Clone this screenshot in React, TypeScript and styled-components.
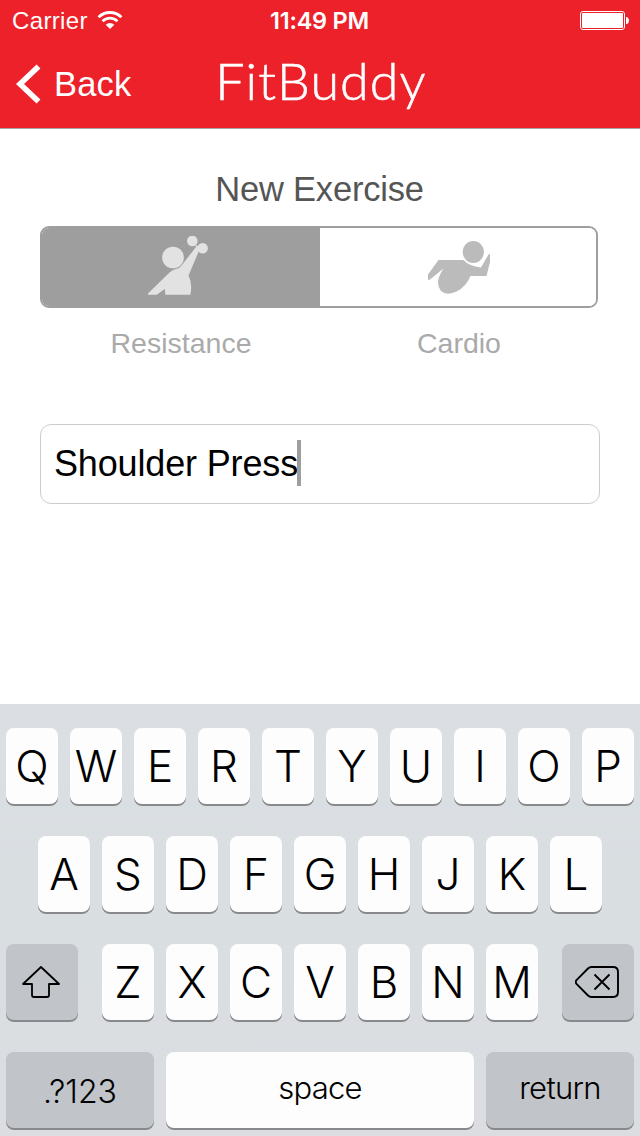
import React from "react";
import styled, { createGlobalStyle } from "styled-components";

const Global = createGlobalStyle`
  * { box-sizing: border-box; }
  body { margin: 0; background: #fff; }
`;

const sans = `"Liberation Sans", Arial, sans-serif`;
const light = `Inter, "Liberation Sans", sans-serif`;

const Screen = styled.div`
  width: 640px;
  height: 1136px;
  display: flex;
  flex-direction: column;
  overflow: hidden;
  background: #fff;
  font-family: ${sans};
`;

const Header = styled.header`
  height: 129px;
  background: #ed2129;
  border-bottom: 1px solid #a5a5a5;
  color: #fff;
`;

const StatusBar = styled.div`
  height: 40px;
  padding: 0 11px 0 12px;
  display: grid;
  grid-template-columns: 1fr auto 1fr;
  align-items: center;

  svg {
    margin-bottom: 2px;
  }
`;

const Carrier = styled.div`
  display: flex;
  align-items: center;
  gap: 9px;
  font-size: 24px;
  line-height: 42px;
  letter-spacing: 0.35px;
`;

const Clock = styled.div`
  font-family: ${light};
  font-weight: 600;
  font-size: 23.5px;
  line-height: 42px;
  padding-right: 2px;
  letter-spacing: -0.25px;
`;

const BatterySlot = styled.div`
  display: flex;
  justify-content: flex-end;
`;

const NavBar = styled.nav`
  height: 88px;
  padding: 0 16px;
  display: grid;
  grid-template-columns: 1fr auto 1fr;
`;

const BackButton = styled.div`
  display: flex;
  align-items: center;
  gap: 12px;
  font-size: 34.5px;
  line-height: 88px;
  letter-spacing: 0.2px;
`;

const Title = styled.h1`
  margin: 0;
  padding-left: 2px;
  font-family: Lato, sans-serif;
  font-weight: 300;
  font-size: 52px;
  line-height: 81px;
  letter-spacing: 1.1px;
  -webkit-text-stroke: 0.6px #fff;
`;

const Main = styled.main`
  height: 575px;
  padding: 40px 40px 0;
`;

const Heading = styled.h2`
  margin: 0;
  padding-right: 1px;
  font-weight: 400;
  font-size: 34.5px;
  line-height: 40px;
  letter-spacing: -0.2px;
  text-align: center;
  color: #555;
`;

const Segments = styled.div`
  width: 558px;
  height: 82px;
  margin-top: 17px;
  display: flex;
  border: 2px solid #9e9e9e;
  border-radius: 9px;
  overflow: hidden;
`;

const Segment = styled.div<{ $active?: boolean }>`
  width: ${(p) => (p.$active ? 278 : 276)}px;
  padding: ${(p) => (p.$active ? "0 4px 2px 0" : "0 0 0 2px")};
  display: flex;
  align-items: center;
  justify-content: center;
  background: ${(p) => (p.$active ? "#9e9e9e" : "#fff")};
`;

const Labels = styled.div`
  width: 560px;
  display: flex;
  margin-top: 17px;
`;

const Label = styled.div`
  flex: 1;
  padding-left: 2px;
  text-align: center;
  font-size: 28.5px;
  line-height: 36px;
  color: #aaa;

  & + & {
    padding: 0 2px 0 0;
  }
`;

const Field = styled.div`
  width: 560px;
  height: 80px;
  margin-top: 63px;
  padding-left: 13px;
  display: flex;
  align-items: center;
  border: 1px solid #ccc;
  border-radius: 11px;
  font-size: 36px;
  line-height: 78px;
  letter-spacing: -0.15px;
  color: #000;
`;

const Caret = styled.span`
  width: 4px;
  height: 46px;
  margin: 0 0 2px -1px;
  background: #9e9e9e;
`;

const Keyboard = styled.section`
  height: 432px;
  padding: 24px 6px 0;
  display: flex;
  flex-direction: column;
  gap: 32px;
  background: linear-gradient(#dbdfe3, #d9dee1 60%, #dcdde1);
`;

const Row = styled.div<{ $spread?: boolean }>`
  display: flex;
  justify-content: ${(p) => (p.$spread ? "space-between" : "center")};
  gap: 12px;
`;

const Letters = styled.div`
  display: flex;
  gap: 12px;
`;

const Key = styled.div<{ $w?: number; $dark?: boolean; $size?: number; $track?: number; $line?: number }>`
  width: ${(p) => p.$w ?? 52}px;
  height: 76px;
  display: flex;
  align-items: ${(p) => (p.$line ? "flex-start" : "center")};
  justify-content: center;
  border-radius: 8px;
  background: ${(p) => (p.$dark ? "#c1c4c8" : "#fdfdfd")};
  box-shadow: 0 2px 0 #88898c;
  font-family: ${light};
  font-weight: 300;
  font-size: ${(p) => p.$size ?? 44}px;
  letter-spacing: ${(p) => p.$track ?? 0}px;
  line-height: ${(p) => p.$line ?? 76}px;
  color: #000;

  & > svg {
    margin-right: 2px;
  }
`;

const WifiIcon = () => (
  <svg width="26" height="20" viewBox="0 0 26 20" fill="none" stroke="#fff">
    <path d="M1.6 7.2a16.2 16.2 0 0 1 22.8 0" strokeWidth="2.9" />
    <path d="M5.5 11.2a10.6 10.6 0 0 1 15 0" strokeWidth="2.7" />
    <path d="M13 19l-4.3-4.3a6.1 6.1 0 0 1 8.6 0z" fill="#fff" stroke="none" />
  </svg>
);

const BatteryIcon = () => (
  <svg width="49" height="19" viewBox="0 0 49 19">
    <rect x="0.5" y="0.5" width="44" height="18" rx="2.5" fill="none" stroke="#fff" />
    <rect x="2" y="2" width="41" height="15" rx="1" fill="#fff" />
    <path d="M46 6h1q2 1 2 3.500t-2 3.500h-1z" fill="#fff" />
  </svg>
);

const BackIcon = () => (
  <svg width="26" height="42" viewBox="0 0 26 42">
    <path d="M22.500 3.500L4 21l18.500 17.500" fill="none" stroke="#fff" strokeWidth="5.600" />
  </svg>
);

const ResistanceIcon = () => (
  <svg width="62" height="60" viewBox="0 0 62 60" fill="#e2e2e2">
    <circle cx="25" cy="21.500" r="10.800" />
    <circle cx="44.300" cy="4.900" r="5.300" />
    <circle cx="54.600" cy="12.300" r="5.300" />
    <path d="M47 8L52 12L50.500 16L40.500 39.500Q44.800 48 42.300 58.800H17.300L16.800 53L8.800 58.800H0V57.500L21 37Q24.500 33.300 28 33Q31.500 32.500 33.500 29.500L48 11Z" />
  </svg>
);

const CardioIcon = () => (
  <svg width="64" height="54" viewBox="0 0 64 54" fill="#bbb">
    <ellipse cx="46.300" cy="12" rx="10.600" ry="11" />
    <path d="M1 34.500L11.500 20H36.500Q42 26 54 27.500L61.500 14.500L63 14V22L59.500 36H43.500Q39 47 29.500 51.500Q20 56 14 51Q7 42.500 16.500 28.500L3 39.500L1 40Z" />
  </svg>
);

const ShiftIcon = () => (
  <svg width="40" height="34" viewBox="0 0 40 34" fill="none" stroke="#000" strokeWidth="1.800" strokeLinejoin="round">
    <path d="M20 2L2 19H11V30q0 2 2 2H26q2 0 2-2V19H38Z" />
  </svg>
);

const DeleteIcon = () => (
  <svg width="44" height="32" viewBox="0 0 44 32" fill="none" stroke="#000" strokeWidth="1.900" strokeLinejoin="round">
    <path d="M16.500 1H38q5 0 5 5V26q0 5-5 5H16.500Q14.500 31 13 29.500L1.500 17.800Q0 16 1.500 14.200L13 2.500Q14.500 1 16.500 1Z" />
    <path d="M19.500 8.500l15 15M34.500 8.500l-15 15" />
  </svg>
);

const LetterKeys = ({ letters }: { letters: string }) => (
  <Letters>
    {letters.split("").map((l) => (
      <Key key={l}>{l}</Key>
    ))}
  </Letters>
);

export default function App() {
  return (
    <Screen>
      <Global />
      <Header>
        <StatusBar>
          <Carrier>
            Carrier
            <WifiIcon />
          </Carrier>
          <Clock>11:49 PM</Clock>
          <BatterySlot>
            <BatteryIcon />
          </BatterySlot>
        </StatusBar>
        <NavBar>
          <BackButton>
            <BackIcon />
            Back
          </BackButton>
          <Title>FitBuddy</Title>
        </NavBar>
      </Header>
      <Main>
        <Heading>New Exercise</Heading>
        <Segments>
          <Segment $active>
            <ResistanceIcon />
          </Segment>
          <Segment>
            <CardioIcon />
          </Segment>
        </Segments>
        <Labels>
          <Label>Resistance</Label>
          <Label>Cardio</Label>
        </Labels>
        <Field>
          Shoulder Press
          <Caret />
        </Field>
      </Main>
      <Keyboard>
        <Row>
          <LetterKeys letters="QWERTYUIOP" />
        </Row>
        <Row>
          <LetterKeys letters="ASDFGHJKL" />
        </Row>
        <Row $spread>
          <Key $w={72} $dark>
            <ShiftIcon />
          </Key>
          <LetterKeys letters="ZXCVBNM" />
          <Key $w={72} $dark>
            <DeleteIcon />
          </Key>
        </Row>
        <Row>
          <Key $w={148} $dark $size={32} $track={0} $line={79}>.?123</Key>
          <Key $w={308} $size={31} $track={-0.8} $line={72}>space</Key>
          <Key $w={148} $dark $size={31} $track={-0.7} $line={72}>return</Key>
        </Row>
      </Keyboard>
    </Screen>
  );
}
